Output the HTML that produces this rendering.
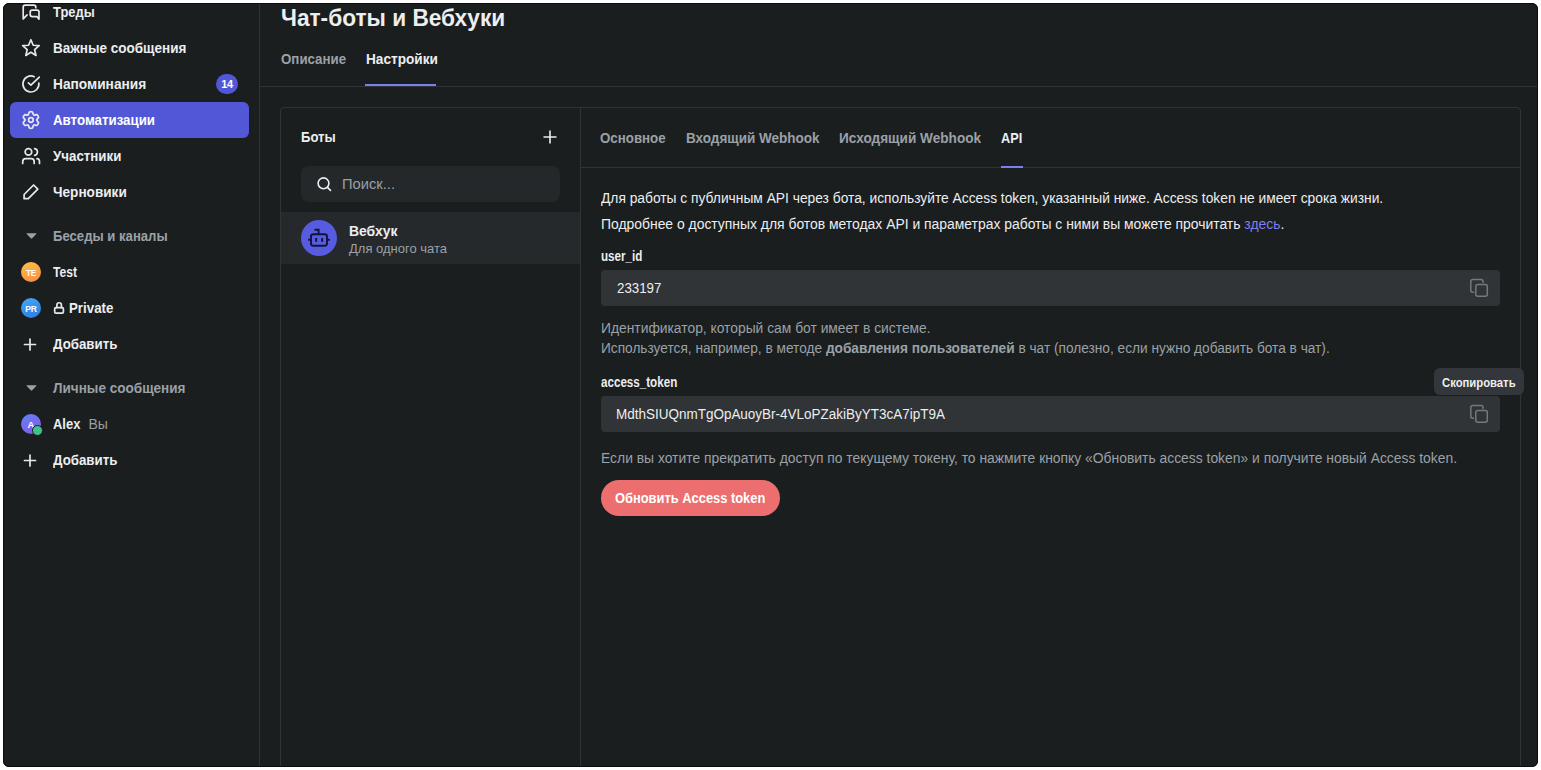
<!DOCTYPE html>
<html><head><meta charset="utf-8">
<style>
*{box-sizing:border-box;margin:0;padding:0}
html,body{width:1541px;height:770px;overflow:hidden;background:#fff}
body{position:relative;font-family:"Liberation Sans",sans-serif;}
#app{position:absolute;left:0;top:0;width:1541px;height:770px;background:#1b1e1f;clip-path:inset(3px 3px 3px 3px round 6px);overflow:hidden}
#frame{position:absolute;left:3px;top:3px;width:1535px;height:764px;border:1px solid #0b0c0d;border-radius:6px;pointer-events:none}
.a{position:absolute;white-space:nowrap;transform-origin:0 0}
.t{line-height:14px;font-size:14px;color:#eceef0}
.b{font-weight:700}
.g{color:#9aa1a7}
.k{transform:scaleX(0.95)}
.r{transform:scaleX(0.985)}
.ln{position:absolute;background:#303437}
svg{position:absolute;overflow:visible}
.ic{fill:none;stroke:#e6e8ea;stroke-width:1.7;stroke-linecap:round;stroke-linejoin:round}
.av{position:absolute;width:20px;height:20px;border-radius:50%;color:#fff;font-weight:700;text-align:center}
</style></head><body>
<div id="app">
  <!-- ============ sidebar ============ -->
  <div class="ln" style="left:259px;top:0;width:1px;height:770px"></div>
  <div class="a" style="left:10px;top:102px;width:239px;height:36px;border-radius:6px;background:#5157d6"></div>

  <svg style="left:0;top:0" width="260" height="480" viewBox="0 0 260 480">
    <!-- threads -->
    <path class="ic" d="M23.2 18.9V7.2Q23.2 5.2 25.2 5.2H33.8Q35.8 5.2 35.8 7.2V7.7M23.2 18.9L27.1 14.9"/>
    <path class="ic" d="M39 19.1V12.1Q39 10.1 37 10.1H32.2Q30.2 10.1 30.2 12.1V14.6Q30.2 16.6 32.2 16.6H36.9L39 19.1"/>
    <!-- star -->
    <path class="ic" d="M30.90 39.70 L33.19 45.24 L39.17 45.71 L34.61 49.61 L36.01 55.44 L30.90 52.30 L25.79 55.44 L27.19 49.61 L22.63 45.71 L28.61 45.24Z"/>
    <!-- check circle -->
    <path class="ic" d="M38.85 83.08A8 8 0 1 1 34.18 76.7M28.4 82.9L30.9 85.1L39.3 77.1"/>
    <!-- gear -->
    <path class="ic" d="M29.35 112.05 Q30.90 111.40 32.45 112.05 L33.23 113.93 Q33.50 115.50 34.99 114.95 L37.01 114.69 Q38.35 115.70 38.56 117.36 L37.32 118.98 Q36.10 120.00 37.32 121.02 L38.56 122.64 Q38.35 124.30 37.01 125.31 L34.99 125.05 Q33.50 124.50 33.23 126.07 L32.45 127.95 Q30.90 128.60 29.35 127.95 L28.57 126.07 Q28.30 124.50 26.81 125.05 L24.79 125.31 Q23.45 124.30 23.24 122.64 L24.48 121.02 Q25.70 120.00 24.48 118.98 L23.24 117.36 Q23.45 115.70 24.79 114.69 L26.81 114.95 Q28.30 115.50 28.57 113.93Z"/>
    <circle class="ic" cx="30.9" cy="120" r="2.3"/>
    <!-- users -->
    <circle class="ic" cx="28.45" cy="151.9" r="3.3"/>
    <path class="ic" d="M34.6 148.6A3.4 3.4 0 0 1 34.6 155.3"/>
    <path class="ic" d="M22.7 163.4V161.7A3 3 0 0 1 25.7 158.7H31.2A3 3 0 0 1 34.2 161.7V163.4M37 158.7A2.5 3 0 0 1 39.5 161.7V163.4"/>
    <!-- pencil -->
    <path class="ic" d="M33.6 185L37.8 189.2L28.3 198.7H24.1V194.5Z"/>
    <!-- carets -->
    <path d="M27 233.3H36Q36.8 233.3 36.3 234L32.2 238.2Q31.5 238.9 30.8 238.2L26.7 234Q26.2 233.3 27 233.3Z" fill="#9aa1a7"/>
    <path d="M27 385.3H36Q36.8 385.3 36.3 386L32.2 390.2Q31.5 390.9 30.8 390.2L26.7 386Q26.2 385.3 27 385.3Z" fill="#9aa1a7"/>
    <!-- lock -->
    <rect class="ic" x="54.7" y="307.7" width="8.7" height="5.4" rx="1.2" stroke-width="1.6"/>
    <path class="ic" d="M56.9 307.6V305A2.25 2.25 0 0 1 61.4 305V307.6" stroke-width="1.6"/>
    <!-- plus -->
    <path class="ic" d="M30 339V350M24.5 344.5H35.5"/>
    <path class="ic" d="M30 455V466M24.5 460.5H35.5"/>
  </svg>

  <div class="a t b" style="left:53px;top:5px;transform:scaleX(0.922)">Треды</div>
  <div class="a t b" style="left:53px;top:41px;transform:scaleX(0.964)">Важные сообщения</div>
  <div class="a t b" style="left:53px;top:77px;transform:scaleX(0.98)">Напоминания</div>
  <div class="a" style="left:216px;top:74px;width:22px;height:20px;border-radius:10px;background:#5157d6"></div>
  <div class="a b" style="left:216px;top:74px;width:22px;height:20px;line-height:21px;font-size:11px;color:#fff;text-align:center;letter-spacing:-0.3px">14</div>
  <div class="a t b k" style="left:53px;top:113px;color:#fff">Автоматизации</div>
  <div class="a t b k" style="left:53px;top:149px">Участники</div>
  <div class="a t b" style="left:53px;top:185px;transform:scaleX(0.97)">Черновики</div>

  <div class="a t b g" style="left:53px;top:229px;transform:scaleX(0.937)">Беседы и каналы</div>
  <div class="av" style="left:21px;top:262px;background:linear-gradient(160deg,#ffc043,#f78a48)"></div>
  <div class="a b" style="left:21px;top:263.2px;width:20px;height:20px;line-height:20px;font-size:9.5px;color:#fff;text-align:center;letter-spacing:-0.3px;transform:scaleX(0.88);transform-origin:50% 0">TE</div>
  <div class="a t b" style="left:53px;top:265px;transform:scaleX(0.862)">Test</div>
  <div class="av" style="left:21px;top:298px;background:linear-gradient(160deg,#42a8f8,#2d7ae0)"></div>
  <div class="a b" style="left:21px;top:299.2px;width:20px;height:20px;line-height:20px;font-size:9.5px;color:#fff;text-align:center;letter-spacing:-0.3px;transform:scaleX(0.9);transform-origin:50% 0">PR</div>
  <div class="a t b k" style="left:69px;top:301px">Private</div>
  <div class="a t b k" style="left:53px;top:337px">Добавить</div>

  <div class="a t b g" style="left:53px;top:381px;transform:scaleX(0.967)">Личные сообщения</div>
  <div class="av" style="left:21px;top:414px;background:linear-gradient(150deg,#5f86f7,#8a52e6)"></div>
  <div class="a b" style="left:21px;top:415.3px;width:20px;height:20px;line-height:20px;font-size:9.5px;color:#fff;text-align:center">A</div>
  <div class="a" style="left:32.2px;top:425px;width:11px;height:11px;border-radius:50%;background:#3ec28b;border:1.6px solid #1b1e1f"></div>
  <div class="a t b" style="left:53px;top:417px;transform:scaleX(0.926)">Alex</div>
  <div class="a t g" style="left:88.4px;top:417px;transform:scaleX(1.0)">Вы</div>
  <div class="a t b k" style="left:53px;top:453px">Добавить</div>

  <!-- ============ header ============ -->
  <div class="a t b" style="left:281px;top:7px;font-size:23px;line-height:23px;transform:scaleX(0.985)">Чат-боты и Вебхуки</div>
  <div class="a t b g k" style="left:280.5px;top:52px">Описание</div>
  <div class="a t b" style="left:366px;top:52px;transform:scaleX(0.974)">Настройки</div>
  <div class="a" style="left:365px;top:84px;width:71px;height:2px;background:#7c80ec"></div>
  <div class="ln" style="left:260px;top:86px;width:1290px;height:1px"></div>

  <!-- ============ panel ============ -->
  <div class="a" style="left:280px;top:107px;width:1241px;height:700px;border:1px solid #303437;border-radius:4px"></div>
  <div class="ln" style="left:580px;top:108px;width:1px;height:700px"></div>
  <div class="ln" style="left:581px;top:167px;width:939px;height:1px"></div>

  <div class="a t b" style="left:301.3px;top:130px;transform:scaleX(0.936)">Боты</div>
  <svg style="left:543px;top:130px" width="14" height="14" viewBox="0 0 14 14"><path d="M7 0.5V13.5M0.5 7H13.5" stroke="#eceef0" stroke-width="1.6"/></svg>

  <div class="a" style="left:301px;top:166px;width:259px;height:36px;border-radius:8px;background:#25282b"></div>
  <svg style="left:317px;top:177px" width="14" height="14" viewBox="0 0 14 14"><circle cx="6.5" cy="6.3" r="5.4" fill="none" stroke="#eceef0" stroke-width="1.6"/><path d="M10.5 10.4L13.5 13.4" stroke="#eceef0" stroke-width="1.6" stroke-linecap="round"/></svg>
  <div class="a t g" style="left:342.2px;top:177px;transform:scaleX(1.05)">Поиск...</div>

  <div class="a" style="left:281px;top:212px;width:299px;height:52px;background:#25292b"></div>
  <div class="a" style="left:301px;top:220px;width:36px;height:36px;border-radius:50%;background:#575be0"></div>
  <svg style="left:301px;top:220px" width="36" height="36" viewBox="0 0 36 36">
    <rect x="10" y="14.2" width="16" height="11.6" rx="2.2" fill="none" stroke="#11143a" stroke-width="1.9"/>
    <path d="M13.4 9.7H17.6V14.2" fill="none" stroke="#11143a" stroke-width="1.9"/>
    <path d="M7.2 19.8H10M26 19.8H28.8" stroke="#11143a" stroke-width="1.9"/>
    <path d="M15.1 17.9V21.8M21.1 17.9V21.8" stroke="#11143a" stroke-width="2"/>
  </svg>
  <div class="a t b" style="left:349.2px;top:224px;transform:scaleX(0.995)">Вебхук</div>
  <div class="a t g" style="left:349px;top:242px;font-size:13px;line-height:13px">Для одного чата</div>

  <!-- ============ right ============ -->
  <div class="a t b g k" style="left:600px;top:131px">Основное</div>
  <div class="a t b g" style="left:686.2px;top:131px;transform:scaleX(0.965)">Входящий Webhook</div>
  <div class="a t b g" style="left:838.9px;top:131px;transform:scaleX(0.972)">Исходящий Webhook</div>
  <div class="a t b" style="left:1001px;top:131px;transform:scaleX(0.907)">API</div>
  <div class="a" style="left:1001px;top:166px;width:22px;height:2px;background:#7c80ec"></div>

  <div class="a t" style="left:601px;top:191px;transform:scaleX(0.985)">Для работы с публичным API через бота, используйте Access token, указанный ниже. Access token не имеет срока жизни.</div>
  <div class="a t" style="left:601px;top:217px;transform:scaleX(0.993)">Подробнее о доступных для ботов методах API и параметрах работы с ними вы можете прочитать <span style="color:#7d80f0">здесь</span>.</div>

  <div class="a t b" style="left:601px;top:249px;transform:scaleX(0.83)">user_id</div>
  <div class="a" style="left:601px;top:270px;width:899px;height:36px;border-radius:4px;background:#303437"></div>
  <div class="a t" style="left:616.5px;top:281px;transform:scaleX(0.95)">233197</div>

  <div class="a t g" style="left:601px;top:321px;transform:scaleX(0.988)">Идентификатор, который сам бот имеет в системе.</div>
  <div class="a t g" style="left:601px;top:341px;transform:scaleX(0.977)">Используется, например, в методе <b>добавления пользователей</b> в чат (полезно, если нужно добавить бота в чат).</div>

  <div class="a t b" style="left:601px;top:375px;transform:scaleX(0.83)">access_token</div>
  <div class="a" style="left:601px;top:396px;width:899px;height:36px;border-radius:4px;background:#303437"></div>
  <div class="a t" style="left:616.2px;top:407px;transform:scaleX(0.963)">MdthSIUQnmTgOpAuoyBr-4VLoPZakiByYT3cA7ipT9A</div>

  <div class="a t g" style="left:601px;top:451px;transform:scaleX(0.991)">Если вы хотите прекратить доступ по текущему токену, то нажмите кнопку «Обновить access token» и получите новый Access token.</div>

  <div class="a" style="left:601px;top:480px;width:179px;height:36px;border-radius:18px;background:#ec6e6e"></div>
  <div class="a t b" style="left:615px;top:491px;color:#fff;transform:scaleX(0.92)">Обновить Access token</div>

  <svg style="left:0;top:0" width="1541" height="770" viewBox="0 0 1541 770">
    <path d="M1483 282.6V281.5A2 2 0 0 0 1481 279.5H1472.8A2 2 0 0 0 1470.8 281.5V290.3A2 2 0 0 0 1472.8 292.3H1473.6" fill="none" stroke="#73797d" stroke-width="1.5" stroke-linecap="round"/>
    <rect x="1475.8" y="284.5" width="11.5" height="11.8" rx="2" fill="none" stroke="#73797d" stroke-width="1.5"/>
    <path d="M1483 408.6V407.5A2 2 0 0 0 1481 405.5H1472.8A2 2 0 0 0 1470.8 407.5V416.3A2 2 0 0 0 1472.8 418.3H1473.6" fill="none" stroke="#73797d" stroke-width="1.5" stroke-linecap="round"/>
    <rect x="1475.8" y="410.5" width="11.5" height="11.8" rx="2" fill="none" stroke="#73797d" stroke-width="1.5"/>
  </svg>

  <!-- tooltip -->
  <div class="a" style="left:1434px;top:368px;width:90px;height:27px;border-radius:6px;background:#33363a"></div>
  <div class="a t b" style="left:1442px;top:377px;font-size:12px;line-height:12px;transform:scaleX(0.94)">Скопировать</div>
</div>
<div id="frame"></div>
</body></html>
